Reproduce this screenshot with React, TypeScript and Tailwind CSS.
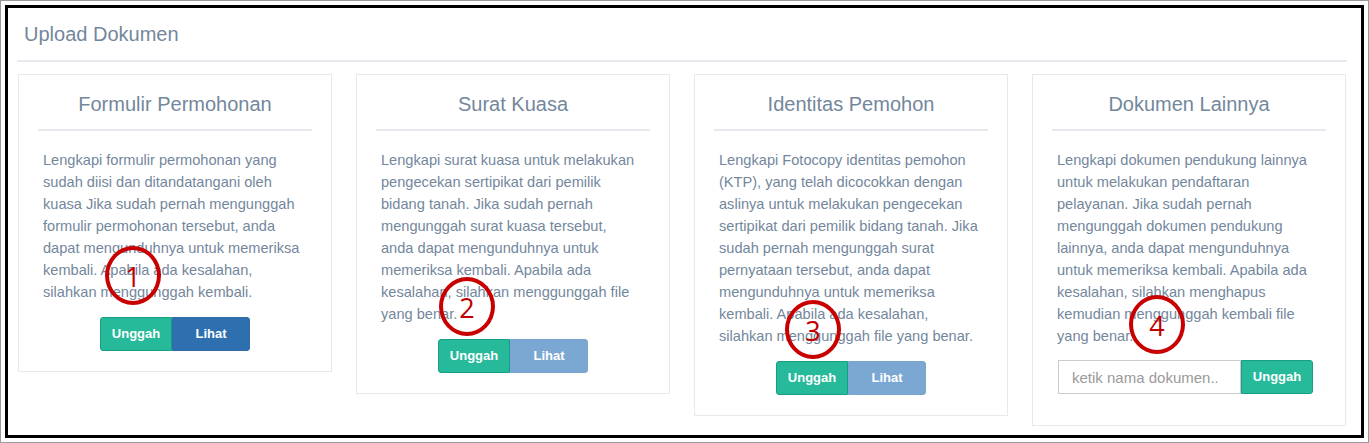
const cards = [
  {
    title: "Formulir Permohonan",
    lines: [
      "Lengkapi formulir permohonan yang",
      "sudah diisi dan ditandatangani oleh",
      "kuasa Jika sudah pernah mengunggah",
      "formulir permohonan tersebut, anda",
      "dapat mengunduhnya untuk memeriksa",
      "kembali. Apabila ada kesalahan,",
      "silahkan menggunggah kembali.",
    ],
    active: true,
  },
  {
    title: "Surat Kuasa",
    lines: [
      "Lengkapi surat kuasa untuk melakukan",
      "pengecekan sertipikat dari pemilik",
      "bidang tanah. Jika sudah pernah",
      "mengunggah surat kuasa tersebut,",
      "anda dapat mengunduhnya untuk",
      "memeriksa kembali. Apabila ada",
      "kesalahan, silahkan menggunggah file",
      "yang benar.",
    ],
    active: false,
  },
  {
    title: "Identitas Pemohon",
    lines: [
      "Lengkapi Fotocopy identitas pemohon",
      "(KTP), yang telah dicocokkan dengan",
      "aslinya untuk melakukan pengecekan",
      "sertipikat dari pemilik bidang tanah. Jika",
      "sudah pernah mengunggah surat",
      "pernyataan tersebut, anda dapat",
      "mengunduhnya untuk memeriksa",
      "kembali. Apabila ada kesalahan,",
      "silahkan menggunggah file yang benar.",
    ],
    active: false,
  },
];

const lainnya = [
  "Lengkapi dokumen pendukung lainnya",
  "untuk melakukan pendaftaran",
  "pelayanan. Jika sudah pernah",
  "mengunggah dokumen pendukung",
  "lainnya, anda dapat mengunduhnya",
  "untuk memeriksa kembali. Apabila ada",
  "kesalahan, silahkan menghapus",
  "kemudian menggunggah kembali file",
  "yang benar.",
];

// red hand-drawn markers over the screenshot
const marks = [
  { n: "1", cls: "left-[104px] top-[245px]" },
  { n: "2", cls: "left-[438px] top-[276px]" },
  { n: "3", cls: "left-[784px] top-[299px]" },
  { n: "4", cls: "left-[1128px] top-[294px]" },
];

function CardHead({ title }: { title: string }) {
  return (
    <div className="pt-[18px] pb-[14px] border-b-2 border-[#e6e9ed] text-center text-[20px] leading-[22px] text-[#73879c]">
      {title}
    </div>
  );
}

function Body({ lines }: { lines: string[] }) {
  return (
    <p className="mt-[18px] px-[5px] text-[14.6px] leading-[22px] text-[#73879c] whitespace-nowrap">
      {lines.map((l, i) => (
        <span key={i} className="block">
          {l}
        </span>
      ))}
    </p>
  );
}

export default function App() {
  return (
    <div
      className="relative w-[1369px] h-[443px] bg-white border border-[#9a9a9a] p-[4px]"
      style={{ fontFamily: '"Liberation Sans", Arial, sans-serif' }}
    >
      <div className="h-full border-[3px] border-black px-[9px] pr-[14px]">
        {/* Panel title */}
        <div className="px-[7px] pt-[15px] pb-[15px] border-b-2 border-[#e6e9ed] text-[20px] leading-[22px] text-[#73879c]">
          Upload Dokumen
        </div>

        <div className="mt-[12px] ml-[1px] flex items-start gap-[24px]">
          {cards.map((c) => (
            <div key={c.title} className="w-[314px] bg-white border border-[#e6e9ed] px-[19px] pb-[20px]">
              <CardHead title={c.title} />
              <Body lines={c.lines} />
              <div className="mt-[14px] flex justify-center">
                <button className="w-[72px] h-[34px] rounded-l-[3px] bg-[#26b99a] border border-[#169f85] text-white text-[13px] font-bold">
                  Unggah
                </button>
                <button
                  className={
                    c.active
                      ? "w-[78px] h-[34px] rounded-r-[3px] bg-[#2e6fb0] border border-[#2e6da4] text-white text-[13px] font-bold"
                      : "w-[78px] h-[34px] rounded-r-[3px] bg-[#7ba7d3] border border-[#7aa5d0] text-white text-[13px] font-bold"
                  }
                >
                  Lihat
                </button>
              </div>
            </div>
          ))}

          <div className="w-[314px] bg-white border border-[#e6e9ed] px-[19px] pb-[31px]">
            <CardHead title="Dokumen Lainnya" />
            <Body lines={lainnya} />
            <div className="mt-[13px] ml-[6px] flex">
              <input
                placeholder="ketik nama dokumen.."
                className="w-[183px] h-[34px] border border-[#ccc] px-[13px] text-[15px] text-[#555] placeholder:text-[#9a9a9a] outline-none"
              />
              <button className="w-[72px] h-[34px] rounded-r-[3px] bg-[#26b99a] border border-[#169f85] text-white text-[13px] font-bold">
                Unggah
              </button>
            </div>
          </div>
        </div>
      </div>

      {marks.map((m) => (
        <div
          key={m.n}
          className={`absolute ${m.cls} w-[56px] h-[59px] rounded-[50%] border-[4px] border-[#c80000] flex items-center justify-center`}
        >
          <span
            className="text-[27px] leading-none font-medium text-[#c00000] mt-[2px]"
            style={{ fontFamily: '"Open Sans", sans-serif' }}
          >
            {m.n}
          </span>
        </div>
      ))}
    </div>
  );
}
